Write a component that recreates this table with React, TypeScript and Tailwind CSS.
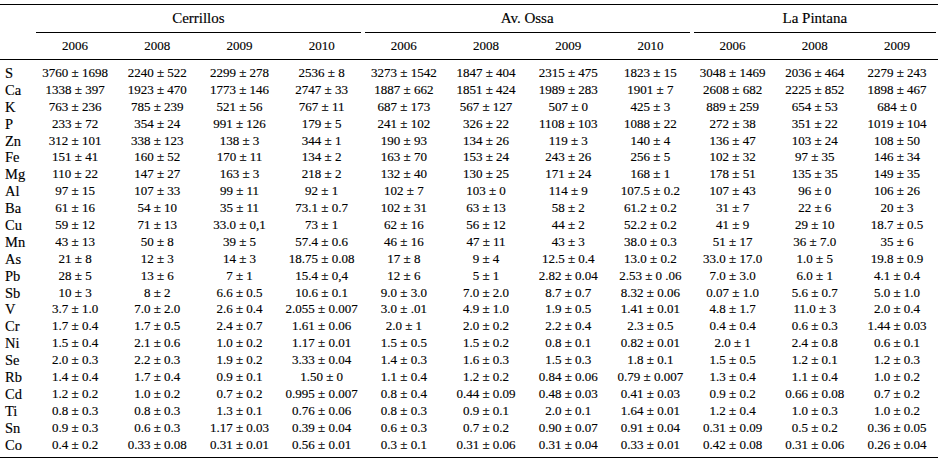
const groups = [
  { name: 'Cerrillos', span: 'col-span-4', years: ['2006', '2008', '2009', '2010'] },
  { name: 'Av. Ossa', span: 'col-span-4', years: ['2006', '2008', '2009', '2010'] },
  { name: 'La Pintana', span: 'col-span-3', years: ['2006', '2008', '2009'] },
]

// element, then 11 values: Cerrillos x4, Av. Ossa x4, La Pintana x3
const rows: [string, string[]][] = [
  ['S', ['3760 ± 1698', '2240 ± 522', '2299 ± 278', '2536 ± 8', '3273 ± 1542', '1847 ± 404', '2315 ± 475', '1823 ± 15', '3048 ± 1469', '2036 ± 464', '2279 ± 243']],
  ['Ca', ['1338 ± 397', '1923 ± 470', '1773 ± 146', '2747 ± 33', '1887 ± 662', '1851 ± 424', '1989 ± 283', '1901 ± 7', '2608 ± 682', '2225 ± 852', '1898 ± 467']],
  ['K', ['763 ± 236', '785 ± 239', '521 ± 56', '767 ± 11', '687 ± 173', '567 ± 127', '507 ± 0', '425 ± 3', '889 ± 259', '654 ± 53', '684 ± 0']],
  ['P', ['233 ± 72', '354 ± 24', '991 ± 126', '179 ± 5', '241 ± 102', '326 ± 22', '1108 ± 103', '1088 ± 22', '272 ± 38', '351 ± 22', '1019 ± 104']],
  ['Zn', ['312 ± 101', '338 ± 123', '138 ± 3', '344 ± 1', '190 ± 93', '134 ± 26', '119 ± 3', '140 ± 4', '136 ± 47', '103 ± 24', '108 ± 50']],
  ['Fe', ['151 ± 41', '160 ± 52', '170 ± 11', '134 ± 2', '163 ± 70', '153 ± 24', '243 ± 26', '256 ± 5', '102 ± 32', '97 ± 35', '146 ± 34']],
  ['Mg', ['110 ± 22', '147 ± 27', '163 ± 3', '218 ± 2', '132 ± 40', '130 ± 25', '171 ± 24', '168 ± 1', '178 ± 51', '135 ± 35', '149 ± 35']],
  ['Al', ['97 ± 15', '107 ± 33', '99 ± 11', '92 ± 1', '102 ± 7', '103 ± 0', '114 ± 9', '107.5 ± 0.2', '107 ± 43', '96 ± 0', '106 ± 26']],
  ['Ba', ['61 ± 16', '54 ± 10', '35 ± 11', '73.1 ± 0.7', '102 ± 31', '63 ± 13', '58 ± 2', '61.2 ± 0.2', '31 ± 7', '22 ± 6', '20 ± 3']],
  ['Cu', ['59 ± 12', '71 ± 13', '33.0 ± 0,1', '73 ± 1', '62 ± 16', '56 ± 12', '44 ± 2', '52.2 ± 0.2', '41 ± 9', '29 ± 10', '18.7 ± 0.5']],
  ['Mn', ['43 ± 13', '50 ± 8', '39 ± 5', '57.4 ± 0.6', '46 ± 16', '47 ± 11', '43 ± 3', '38.0 ± 0.3', '51 ± 17', '36 ± 7.0', '35 ± 6']],
  ['As', ['21 ± 8', '12 ± 3', '14 ± 3', '18.75 ± 0.08', '17 ± 8', '9 ± 4', '12.5 ± 0.4', '13.0 ± 0.2', '33.0 ± 17.0', '1.0 ± 5', '19.8 ± 0.9']],
  ['Pb', ['28 ± 5', '13 ± 6', '7 ± 1', '15.4 ± 0,4', '12 ± 6', '5 ± 1', '2.82 ± 0.04', '2.53 ± 0 .06', '7.0 ± 3.0', '6.0 ± 1', '4.1 ± 0.4']],
  ['Sb', ['10 ± 3', '8 ± 2', '6.6 ± 0.5', '10.6 ± 0.1', '9.0 ± 3.0', '7.0 ± 2.0', '8.7 ± 0.7', '8.32 ± 0.06', '0.07 ± 1.0', '5.6 ± 0.7', '5.0 ± 1.0']],
  ['V', ['3.7 ± 1.0', '7.0 ± 2.0', '2.6 ± 0.4', '2.055 ± 0.007', '3.0 ± .01', '4.9 ± 1.0', '1.9 ± 0.5', '1.41 ± 0.01', '4.8 ± 1.7', '11.0 ± 3', '2.0 ± 0.4']],
  ['Cr', ['1.7 ± 0.4', '1.7 ± 0.5', '2.4 ± 0.7', '1.61 ± 0.06', '2.0 ± 1', '2.0 ± 0.2', '2.2 ± 0.4', '2.3 ± 0.5', '0.4 ± 0.4', '0.6 ± 0.3', '1.44 ± 0.03']],
  ['Ni', ['1.5 ± 0.4', '2.1 ± 0.6', '1.0 ± 0.2', '1.17 ± 0.01', '1.5 ± 0.5', '1.5 ± 0.2', '0.8 ± 0.1', '0.82 ± 0.01', '2.0 ± 1', '2.4 ± 0.8', '0.6 ± 0.1']],
  ['Se', ['2.0 ± 0.3', '2.2 ± 0.3', '1.9 ± 0.2', '3.33 ± 0.04', '1.4 ± 0.3', '1.6 ± 0.3', '1.5 ± 0.3', '1.8 ± 0.1', '1.5 ± 0.5', '1.2 ± 0.1', '1.2 ± 0.3']],
  ['Rb', ['1.4 ± 0.4', '1.7 ± 0.4', '0.9 ± 0.1', '1.50 ± 0', '1.1 ± 0.4', '1.2 ± 0.2', '0.84 ± 0.06', '0.79 ± 0.007', '1.3 ± 0.4', '1.1 ± 0.4', '1.0 ± 0.2']],
  ['Cd', ['1.2 ± 0.2', '1.0 ± 0.2', '0.7 ± 0.2', '0.995 ± 0.007', '0.8 ± 0.4', '0.44 ± 0.09', '0.48 ± 0.03', '0.41 ± 0.03', '0.9 ± 0.2', '0.66 ± 0.08', '0.7 ± 0.2']],
  ['Ti', ['0.8 ± 0.3', '0.8 ± 0.3', '1.3 ± 0.1', '0.76 ± 0.06', '0.8 ± 0.3', '0.9 ± 0.1', '2.0 ± 0.1', '1.64 ± 0.01', '1.2 ± 0.4', '1.0 ± 0.3', '1.0 ± 0.2']],
  ['Sn', ['0.9 ± 0.3', '0.6 ± 0.3', '1.17 ± 0.03', '0.39 ± 0.04', '0.6 ± 0.3', '0.7 ± 0.2', '0.90 ± 0.07', '0.91 ± 0.04', '0.31 ± 0.09', '0.5 ± 0.2', '0.36 ± 0.05']],
  ['Co', ['0.4 ± 0.2', '0.33 ± 0.08', '0.31 ± 0.01', '0.56 ± 0.01', '0.3 ± 0.1', '0.31 ± 0.06', '0.31 ± 0.04', '0.33 ± 0.01', '0.42 ± 0.08', '0.31 ± 0.06', '0.26 ± 0.04']],
]

const grid = 'grid grid-cols-[34px_repeat(11,82.2px)]'

export default function App() {
  return (
    <div className="bg-white pt-[4px] h-[464px] text-black [-webkit-text-stroke:0.15px_black] font-['Liberation_Serif','Times_New_Roman',serif]">
      <div className="w-[938px] border-t border-b border-black">
        {/* site headings with trimmed rules */}
        <div className={grid}>
          <div />
          {groups.map((g) => (
            <div key={g.name} className={`${g.span} flex flex-col`}>
              <div className="h-[27px] flex items-center justify-center text-[15px]">{g.name}</div>
              <div className="mx-[2px] border-b border-black" />
            </div>
          ))}
        </div>

        {/* years */}
        <div className={`${grid} h-[27px] border-b border-black text-[13px]`}>
          <div />
          {groups.flatMap((g) =>
            g.years.map((y) => (
              <div key={g.name + y} className="flex items-center justify-center">
                {y}
              </div>
            )),
          )}
        </div>

        {/* body: 23 rows of 16.9px */}
        <div className="grid grid-rows-[repeat(23,16.9px)] pt-[4.5px] pb-[4.5px]">
          {rows.map(([el, vals]) => (
            <div key={el} className={`${grid} items-center`}>
              <div className="pl-[5px] text-[14.5px] leading-[16px]">{el}</div>
              {vals.map((v, i) => (
                <div key={i} className="text-center text-[13px] leading-[16px] whitespace-nowrap">
                  {v}
                </div>
              ))}
            </div>
          ))}
        </div>
      </div>
    </div>
  )
}
